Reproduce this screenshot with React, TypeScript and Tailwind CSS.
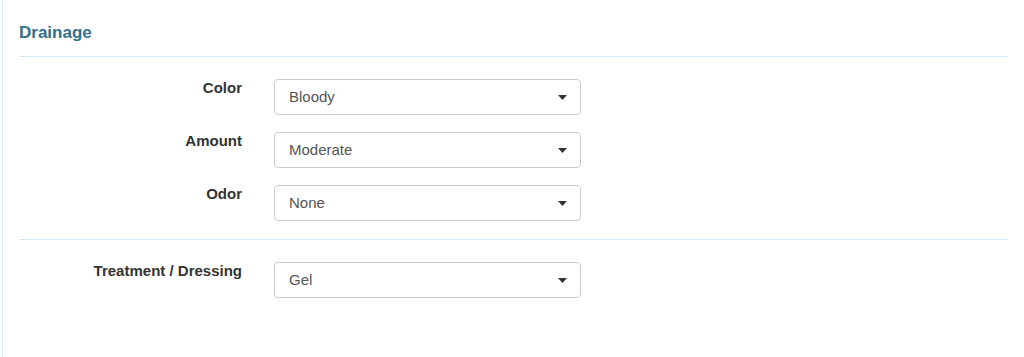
const Caret = () => (
  <svg width="9" height="5" viewBox="0 0 9 5" className="text-[#333]">
    <path d="M0 0h9L4.5 5z" fill="currentColor" />
  </svg>
);

const SelectField = ({ label, value }: { label: string; value: string }) => (
  <div className="flex items-start">
    <label className="w-[223px] text-right text-[15px] leading-[18px] font-bold text-[#333]">{label}</label>
    <div className="ml-[32px] flex h-[36px] w-[307px] items-center justify-between rounded-[4px] border border-[#ccc] bg-white pl-[14px] pr-[13px]">
      <span className="text-[15px] text-[#555]">{value}</span>
      <Caret />
    </div>
  </div>
);

export default function App() {
  return (
    <div
      className="h-[357px] bg-white"
      style={{ fontFamily: '"Liberation Sans", Arial, sans-serif' }}
    >
      <div className="ml-[2px] h-full border-l border-[#d6edf8] pl-[16px] pr-[16px]">
        {/* Heading */}
        <div className="pt-[23px]">
          <h3 className="text-[17px] leading-[20px] font-bold text-[#31708f]">Drainage</h3>
          <div className="mt-[13px] h-px bg-[#d2ecf8]" />
        </div>

        {/* Wound drainage */}
        <div className="flex flex-col gap-[17px] pt-[22px]">
          <SelectField label="Color" value="Bloody" />
          <SelectField label="Amount" value="Moderate" />
          <SelectField label="Odor" value="None" />
        </div>

        <div className="mt-[18px] h-px bg-[#d2ecf8]" />

        <div className="pt-[22px]">
          <SelectField label="Treatment / Dressing" value="Gel" />
        </div>
      </div>
    </div>
  );
}
